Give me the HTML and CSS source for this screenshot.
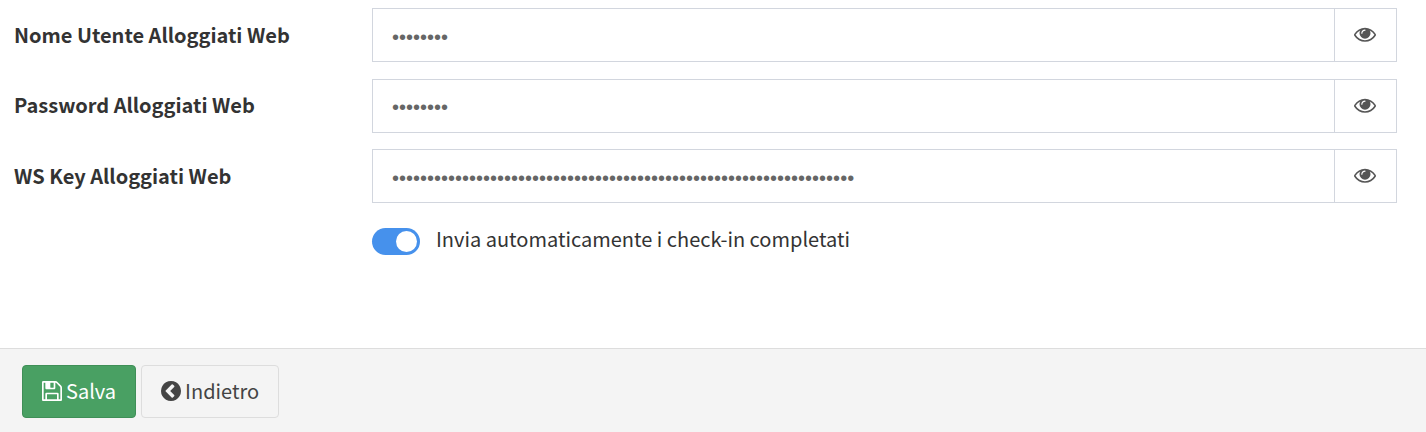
FILE: index.html
```html
<!DOCTYPE html>
<html lang="en">
<head>
    <meta charset="UTF-8">
    <title>Alloggiati Web</title>
    <link rel="stylesheet" href="styles.css">
</head>
<body>
    <form class="settings-form">
        <div class="form-body">
            <div class="form-group">
                <label class="form-label" for="user">Nome Utente Alloggiati Web</label>
                <div class="input-group">
                    <input class="form-input" type="password" id="user" value="12345678">
                    <span class="input-addon">
                        <svg class="icon-eye" viewBox="0 0 1792 1792"><path d="M1664 960q-152-236-381-353 61 104 61 225 0 185-131.500 316.500t-316.500 131.500-316.500-131.500-131.500-316.500q0-121 61-225-229 117-381 353 133 205 333.500 326.500t434.500 121.500 434.500-121.500 333.500-326.500zm-720-384q0-20-14-34t-34-14q-125 0-214.500 89.500t-89.500 214.500q0 20 14 34t34 14 34-14 14-34q0-86 61-147t147-61q20 0 34-14t14-34zm848 384q0 34-20 69-140 230-376.500 368.500t-499.500 138.500-499.500-139-376.500-368q-20-35-20-69t20-69q140-229 376.500-368t499.500-139 499.500 139 376.500 368q20 35 20 69z"/></svg>
                    </span>
                </div>
            </div>
            <div class="form-group">
                <label class="form-label" for="pass">Password Alloggiati Web</label>
                <div class="input-group">
                    <input class="form-input" type="password" id="pass" value="12345678">
                    <span class="input-addon">
                        <svg class="icon-eye" viewBox="0 0 1792 1792"><path d="M1664 960q-152-236-381-353 61 104 61 225 0 185-131.500 316.500t-316.500 131.500-316.500-131.500-131.500-316.500q0-121 61-225-229 117-381 353 133 205 333.500 326.500t434.500 121.500 434.500-121.500 333.500-326.500zm-720-384q0-20-14-34t-34-14q-125 0-214.500 89.500t-89.500 214.500q0 20 14 34t34 14 34-14 14-34q0-86 61-147t147-61q20 0 34-14t14-34zm848 384q0 34-20 69-140 230-376.500 368.500t-499.500 138.500-499.500-139-376.500-368q-20-35-20-69t20-69q140-229 376.500-368t499.500-139 499.500 139 376.500 368q20 35 20 69z"/></svg>
                    </span>
                </div>
            </div>
            <div class="form-group">
                <label class="form-label" for="wskey">WS Key Alloggiati Web</label>
                <div class="input-group">
                    <input class="form-input" type="password" id="wskey" value="123456789012345678901234567890123456789012345678901234567890123456">
                    <span class="input-addon">
                        <svg class="icon-eye" viewBox="0 0 1792 1792"><path d="M1664 960q-152-236-381-353 61 104 61 225 0 185-131.500 316.500t-316.500 131.500-316.500-131.500-131.500-316.500q0-121 61-225-229 117-381 353 133 205 333.500 326.500t434.500 121.500 434.500-121.500 333.500-326.500zm-720-384q0-20-14-34t-34-14q-125 0-214.500 89.500t-89.500 214.500q0 20 14 34t34 14 34-14 14-34q0-86 61-147t147-61q20 0 34-14t14-34zm848 384q0 34-20 69-140 230-376.500 368.500t-499.500 138.500-499.500-139-376.500-368q-20-35-20-69t20-69q140-229 376.500-368t499.500-139 499.500 139 376.500 368q20 35 20 69z"/></svg>
                    </span>
                </div>
            </div>
            <div class="form-group switch-group">
                <span class="form-label"></span>
                <div class="switch-line">
                    <span class="switch"><span class="switch-knob"></span></span>
                    <span class="switch-text">Invia automaticamente i check-in completati</span>
                </div>
            </div>
        </div>
        <div class="form-footer">
            <button class="btn btn-save" type="button">
                <svg class="btn-icon" viewBox="128 128 1536 1536"><path d="M512 1536h768v-384h-768v384zm896 0h128v-896q0-14-10-38.500t-20-34.500l-281-281q-10-10-34-20t-39-10v416q0 40-28 68t-68 28h-576q-40 0-68-28t-28-68v-416h-128v1280h128v-416q0-40 28-68t68-28h832q40 0 68 28t28 68v416zm-384-928v-320q0-13-9.500-22.500t-22.500-9.500h-192q-13 0-22.500 9.500t-9.500 22.500v320q0 13 9.500 22.500t22.500 9.500h192q13 0 22.500-9.500t9.500-22.500zm640 32v928q0 40-28 68t-68 28h-1344q-40 0-68-28t-28-68v-1344q0-40 28-68t68-28h928q40 0 88 20t76 48l280 280q28 28 48 76t20 88z"/></svg>
                Salva
            </button>
            <button class="btn btn-back" type="button">
                <svg class="btn-icon" viewBox="128 128 1536 1536"><path d="M1037 1395l102-102q19-19 19-45t-19-45l-307-307 307-307q19-19 19-45t-19-45l-102-102q-19-19-45-19t-45 19l-454 454q-19 19-19 45t19 45l454 454q19 19 45 19t45-19zm627-499q0 209-103 385.500t-279.500 279.500-385.500 103-385.500-103-279.500-279.500-103-385.500 103-385.500 279.500-279.500 385.500-103 385.500 103 279.500 279.500 103 385.500z"/></svg>
                Indietro
            </button>
        </div>
    </form>
</body>
</html>
```

FILE: styles.css
```css
html, body {
    height: 100%;
}

body {
    margin: 0;
    font-family: "Noto Sans CJK SC", "Noto Sans", sans-serif;
    font-size: 20px;
    color: #333;
    background-color: #fff;
}

.settings-form {
    height: 432px;
    display: flex;
    flex-direction: column;
}

.form-body {
    flex: 1;
    padding: 8px 29px 0 14px;
    display: flex;
    flex-direction: column;
    gap: 16.5px;
}

.form-group {
    display: flex;
    align-items: center;
}

.form-label {
    width: 358px;
    flex: none;
    font-weight: 700;
    line-height: 54px;
    margin-top: -1px;
}

.input-group {
    flex: 1;
    display: flex;
    height: 54px;
    box-sizing: border-box;
    border: 1px solid #d2d6de;
}

.form-input {
    flex: 1;
    min-width: 0;
    border: none;
    outline: none;
    padding: 4px 19px 0;
    font-family: "Liberation Sans", Arial, sans-serif;
    font-size: 20px;
    color: #666;
    background: transparent;
}

.input-addon {
    width: 62px;
    flex: none;
    border-left: 1px solid #d2d6de;
    box-sizing: border-box;
    padding-right: 2px;
    display: flex;
    align-items: center;
    justify-content: center;
}

.icon-eye {
    width: 22px;
    height: 22px;
    fill: #555;
    margin-top: -2px;
}

.switch-group {
    margin-top: 6px;
}

.switch-group .form-label {
    line-height: 32px;
}

.switch-line {
    display: flex;
    align-items: center;
    gap: 16px;
}

.switch {
    width: 48px;
    height: 27px;
    margin-top: 2px;
    border-radius: 14px;
    background-color: #4691ec;
    position: relative;
}

.switch-knob {
    position: absolute;
    top: 3px;
    right: 3px;
    width: 21px;
    height: 21px;
    border-radius: 50%;
    background-color: #fff;
}

.switch-text {
    line-height: 32px;
    margin-top: -3px;
}

.form-footer {
    height: 84px;
    box-sizing: border-box;
    border-top: 1px solid #ddd;
    background-color: #f4f4f4;
    padding: 16px 22px 0;
    display: flex;
    align-items: flex-start;
    gap: 5px;
}

.btn {
    height: 53px;
    box-sizing: border-box;
    border-radius: 4px;
    font-family: inherit;
    font-size: 20px;
    padding: 0 19px 2px;
    display: flex;
    align-items: center;
    gap: 4px;
}

.btn-icon {
    width: 20px;
    height: 20px;
    fill: currentColor;
}

.btn-save {
    background-color: #49a063;
    border: 1px solid #3f8f57;
    color: #fff;
}

.btn-back {
    background-color: #f4f4f4;
    border: 1px solid #ddd;
    color: #444;
}
```
